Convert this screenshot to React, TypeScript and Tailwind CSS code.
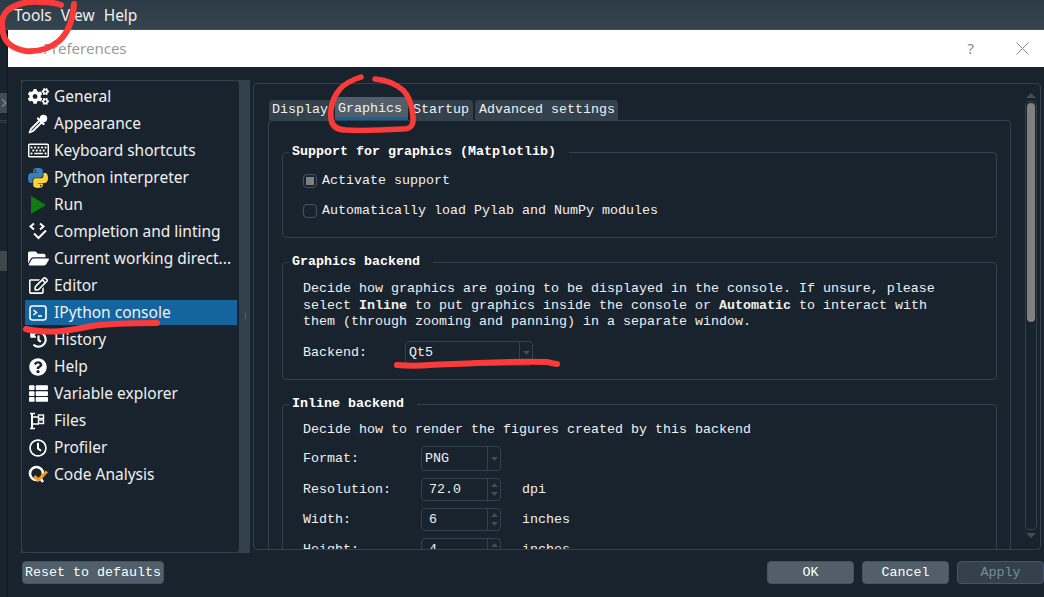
import type { ReactNode } from 'react';
import {
  FaCogs,
  FaRegKeyboard,
  FaFolderOpen,
  FaRegEdit,
  FaHistory,
  FaQuestionCircle,
  FaThList,
  FaRegClock,
} from 'react-icons/fa';
import { ChevronRight } from 'lucide-react';

const PythonIcon = () => (
  <svg width="20" height="20" viewBox="0 0 24 24">
    <path
      fill="#3c7fb5"
      fillRule="evenodd"
      d="M11.9 0C5.8 0 6.2 2.6 6.2 2.6v2.7H12v.8H3.9S0 5.7 0 11.9s3.4 6 3.4 6h2v-2.9s-.1-3.4 3.4-3.4h5.7s3.2.1 3.2-3.1V3.2S18.3 0 11.9 0zM8.7 1.9a1 1 0 1 1 0 2.1 1 1 0 0 1 0-2.1z"
    />
    <path
      fill="#fdd23c"
      fillRule="evenodd"
      transform="rotate(180 12 12)"
      d="M11.9 0C5.8 0 6.2 2.6 6.2 2.6v2.7H12v.8H3.9S0 5.7 0 11.9s3.4 6 3.4 6h2v-2.9s-.1-3.4 3.4-3.4h5.7s3.2.1 3.2-3.1V3.2S18.3 0 11.9 0zM8.7 1.9a1 1 0 1 1 0 2.1 1 1 0 0 1 0-2.1z"
    />
  </svg>
);

const EyedropperIcon = () => (
  <svg width="20" height="20" viewBox="0 0 20 20" fill="none">
    <path d="M11.5 6.5 L3 15 L1.5 18.5 L5 17 L13.5 8.5" stroke="#fff" strokeWidth="1.8" strokeLinejoin="round" />
    <circle cx="15.5" cy="4.5" r="3.7" fill="#fff" />
    <path d="M10 4.5 L15.5 10" stroke="#fff" strokeWidth="2.4" strokeLinecap="round" />
  </svg>
);

const RunIcon = () => (
  <svg width="20" height="20" viewBox="0 0 20 20">
    <path d="M3 1 L18 10 L3 19 Z" fill="#0d7d12" />
  </svg>
);

const CompletionIcon = () => (
  <svg width="20" height="20" viewBox="0 0 20 20" fill="none" stroke="#fff" strokeWidth="2">
    <path d="M6 1.5 L2.5 4.5 L6 7.5" />
    <path d="M12 1.5 L15.5 4.5 L12 7.5" />
    <path d="M6 11.5 L10.5 16 L18 8.5" />
  </svg>
);

const ConsoleIcon = () => (
  <svg width="20" height="20" viewBox="0 0 20 20" fill="none" stroke="#fff" strokeWidth="1.6">
    <rect x="2" y="3" width="16" height="14" rx="2.5" />
    <path d="M5.5 7 L8.5 9.5 L5.5 12" />
    <path d="M10 13 H14" />
  </svg>
);

const FilesIcon = () => (
  <svg width="20" height="20" viewBox="0 0 20 20" fill="none" stroke="#fff">
    <path d="M4 2 V18" strokeWidth="2" />
    <path d="M2 2.5 H7 M2 17.5 H7 M4 6 H11 M4 13 H11" strokeWidth="1.6" />
    <rect x="10.5" y="4" width="5" height="3.5" strokeWidth="1.4" />
    <rect x="10.5" y="9" width="5" height="3.5" strokeWidth="1.4" />
  </svg>
);

const CodeAnalysisIcon = () => (
  <svg width="20" height="20" viewBox="0 0 20 20" fill="none">
    <circle cx="8.5" cy="8.5" r="6.5" stroke="#fff" strokeWidth="2.6" />
    <path d="M12 13 L15 17" stroke="#fff" strokeWidth="2.6" />
    <path d="M6.5 11 L10 15 L19 6.5" stroke="#f59b14" strokeWidth="3" />
  </svg>
);

const navItems: { label: string; icon: ReactNode; active?: boolean }[] = [
  { label: 'General', icon: <FaCogs size={21} color="#fff" /> },
  { label: 'Appearance', icon: <EyedropperIcon /> },
  { label: 'Keyboard shortcuts', icon: <FaRegKeyboard size={21} color="#fff" /> },
  { label: 'Python interpreter', icon: <PythonIcon /> },
  { label: 'Run', icon: <RunIcon /> },
  { label: 'Completion and linting', icon: <CompletionIcon /> },
  { label: 'Current working direct...', icon: <FaFolderOpen size={21} color="#fff" /> },
  { label: 'Editor', icon: <FaRegEdit size={19} color="#fff" /> },
  { label: 'IPython console', icon: <ConsoleIcon />, active: true },
  { label: 'History', icon: <FaHistory size={17} color="#fff" /> },
  { label: 'Help', icon: <FaQuestionCircle size={18} color="#fff" /> },
  { label: 'Variable explorer', icon: <FaThList size={19} color="#fff" /> },
  { label: 'Files', icon: <FilesIcon /> },
  { label: 'Profiler', icon: <FaRegClock size={18} color="#fff" /> },
  { label: 'Code Analysis', icon: <CodeAnalysisIcon /> },
];

const GroupBox = ({ title, className, children }: { title: string; className: string; children: ReactNode }) => (
  <fieldset className={`rounded border border-[#32414b] ${className}`}>
    <legend className="ml-[6px] px-[3px] font-bold text-white text-[13.33px] leading-[16px]">
      <span className="pr-[10px]">{title}</span>
    </legend>
    <div className="pl-[20px]">{children}</div>
  </fieldset>
);

const Arrow = ({ up, big }: { up?: boolean; big?: boolean }) => (
  <svg width={big ? 10 : 7} height={big ? 5 : 4} viewBox="0 0 10 6" preserveAspectRatio="none">
    <path d={up ? 'M5 0 L10 6 H0 Z' : 'M0 0 H10 L5 6 Z'} fill="#3f4f5a" />
  </svg>
);

const Combo = ({ value, width }: { value: string; width: string }) => (
  <div className={`flex h-[25px] items-center rounded border border-[#32414b] ${width}`}>
    <span className="flex-1 pl-[3px]">{value}</span>
    <span className="flex h-full w-[13px] items-center justify-center border-l border-[#32414b]">
      <Arrow />
    </span>
  </div>
);

const Spin = ({ value }: { value: string }) => (
  <div className="flex h-[23px] w-[80px] items-center rounded border border-[#32414b]">
    <span className="flex-1 pl-[7px]">{value}</span>
    <span className="flex h-full w-[13px] flex-col items-center justify-around border-l border-[#32414b] py-[2px]">
      <Arrow up />
      <Arrow />
    </span>
  </div>
);

const FormRow = ({ label, unit, children }: { label: string; unit?: string; children: ReactNode }) => (
  <div className="flex items-center">
    <span className="w-[118px]">{label}</span>
    {children}
    {unit && <span className="ml-[21px]">{unit}</span>}
  </div>
);

const FooterButton = ({ label, disabled }: { label: string; disabled?: boolean }) => (
  <button
    className={`h-[23px] w-[87px] shrink-0 rounded border border-[#455364] pt-px text-center ${
      disabled ? 'bg-[#32414b] text-[#788d9c]' : 'bg-[#505f69] text-white'
    }`}
  >
    {label}
  </button>
);

const Annotations = () => (
  <svg
    className="pointer-events-none absolute left-0 top-0"
    width="1044"
    height="597"
    fill="none"
    stroke="#fb3a3a"
    strokeWidth="5.5"
    strokeLinecap="round"
    strokeLinejoin="round"
  >
    <path d="M74 4 C73 18 69 32 59 41 C49 49 37 52 26 51 C14 49 5 43 3 33 C1 24 2 15 8 10 C16 4 28 1 40 2 C48 2 56 3 61 5" strokeWidth="6" />
    <path d="M361 77 C352 80 345 83 340 89 C333 97 330 108 331 119 C332 126 337 130 346 130 C362 131 385 130 403 129 C411 129 414 125 413 116 C412 105 409 96 403 90 C396 84 386 80 375 79" />
    <path d="M26 329 C38 332 50 332 62 331 C72 330 82 328 92 326 C105 324 125 323 157 323" strokeWidth="6" />
    <path d="M397 365 C408 366 420 366 430 365 C445 364 462 364 477 363 C500 362 525 361 547 362 C552 363 555 364 557 364" strokeWidth="6" />
  </svg>
);

export default function App() {
  return (
    <div className="relative flex h-[597px] w-[1044px] flex-col overflow-hidden bg-[#19232d] font-['Liberation_Mono',monospace] text-[13.33px] leading-[16px] text-[#f0f0f0]">
      {/* Main window menu bar */}
      <div className="flex h-[30px] shrink-0 items-center gap-[9px] border-b border-[#455364] bg-gradient-to-b from-[#2c3a45] to-[#35454f] pl-[14px] font-['Noto_Sans',sans-serif] text-[15.5px] text-[#f0f0f0]">
        <span>Tools</span>
        <span>View</span>
        <span>Help</span>
      </div>

      <div className="flex min-h-0 flex-1">
        {/* Bit of the main window left of the dialog */}
        <div className="flex w-[8px] shrink-0 flex-col border-r border-[#11181f] pt-[63px]">
          <div className="flex h-[20px] items-center bg-[#404a52] text-[#7f8a92]">
            <ChevronRight size={14} className="-ml-[3px] shrink-0" />
          </div>
          <div className="mt-[7px] h-[3px] border-y border-[#32414b]" />
          <div className="mt-[128px] h-[20px] bg-[#3f464c]" />
        </div>

        {/* Preferences dialog */}
        <div className="flex min-w-0 flex-1 flex-col">
          <div className="flex h-[37px] shrink-0 items-center bg-white pb-[1px] pl-[35px] pr-[15px] font-['Noto_Sans',sans-serif] text-[15px] text-[#9b9b9b]">
            <span className="flex-1">Preferences</span>
            <span className="mr-[42px] text-[15px] text-[#8a8a8a]">?</span>
            <svg width="13" height="13" viewBox="0 0 13 13" stroke="#8a8a8a" fill="none">
              <path d="M0.5 0.5 L12.5 12.5 M12.5 0.5 L0.5 12.5" />
            </svg>
          </div>

          <div className="box-content flex h-[473px] shrink-0 pl-[13px] pr-[3px] pt-[13px]">
            {/* Page list */}
            <div className="flex w-[229px] shrink-0 bg-[#32414b]">
              <div className="flex w-[219px] flex-col gap-[2px] rounded-sm border border-[#32414b] bg-[#19232d] pl-[3px] pr-[2px] pt-[3px] font-['Noto_Sans',sans-serif] text-[15.5px]">
                {navItems.map((item) => (
                  <div
                    key={item.label}
                    className={`flex h-[25px] shrink-0 items-center ${item.active ? 'bg-[#1464a0] text-[#f0f0f0]' : ''}`}
                  >
                    <span className="flex w-[29px] shrink-0 justify-center pr-[3px]">{item.icon}</span>
                    <span className="whitespace-nowrap pb-[2px]">{item.label}</span>
                  </div>
                ))}
              </div>
              <div className="flex flex-1 items-center justify-center">
                <div className="h-[7px] w-px bg-[#505f69]" />
              </div>
            </div>

            {/* Page content */}
            <div className="ml-[3px] mt-[3px] flex h-[467px] min-w-0 flex-1 rounded border border-[#32414b] pl-[14px] pr-[4px]">
              <div className="flex w-[743px] shrink-0 flex-col pt-[13px]">
                <div className="flex h-[23px] shrink-0 items-end gap-[2px] pl-px">
                  <div className="flex h-[20px] w-[64px] items-center rounded-t-sm bg-[#32414b] pl-[3px]">Display</div>
                  <div className="flex h-[23px] w-[73px] items-center rounded-t-sm border-b-[3px] border-[#1464a0] bg-[#505f69] pl-[3px] pt-[4px]">
                    Graphics
                  </div>
                  <div className="flex h-[20px] w-[63px] items-center rounded-t-sm bg-[#32414b] pl-[3px]">Startup</div>
                  <div className="flex h-[20px] w-[143px] items-center rounded-t-sm bg-[#32414b] pl-[4px]">
                    Advanced settings
                  </div>
                </div>
                <div className="h-0 min-h-0 flex-1 overflow-hidden rounded-t border-x border-t border-[#32414b] px-[13px] pt-[23px]">
                  <GroupBox title="Support for graphics (Matplotlib)" className="h-[94px] pt-[13px]">
                    <div className="flex items-center gap-[5px]">
                      <span className="flex h-[14px] w-[14px] items-center justify-center rounded-sm border border-[#455364]">
                        <span className="h-[8px] w-[8px] bg-[#808080]" />
                      </span>
                      Activate support
                    </div>
                    <div className="mt-[14px] flex items-center gap-[5px]">
                      <span className="h-[14px] w-[14px] rounded-sm border border-[#455364]" />
                      Automatically load Pylab and NumPy modules
                    </div>
                  </GroupBox>

                  <GroupBox title="Graphics backend" className="mt-[16px] h-[126px] pt-[11px]">
                    <p className="leading-[16.5px]">
                      Decide how graphics are going to be displayed in the console. If unsure, please
                      <br />
                      select <b>Inline</b> to put graphics inside the console or <b>Automatic</b> to interact with
                      <br />
                      them (through zooming and panning) in a separate window.
                    </p>
                    <div className="mt-[10px] flex items-center">
                      <span className="w-[102px]">Backend:</span>
                      <Combo value="Qt5" width="w-[128px]" />
                    </div>
                  </GroupBox>

                  <GroupBox title="Inline backend" className="mt-[16px] h-[190px] pt-[10px]">
                    <p>Decide how to render the figures created by this backend</p>
                    <div className="mt-[8px] flex flex-col gap-[7px]">
                      <FormRow label="Format:">
                        <Combo value="PNG" width="w-[80px]" />
                      </FormRow>
                      <FormRow label="Resolution:" unit="dpi">
                        <Spin value="72.0" />
                      </FormRow>
                      <FormRow label="Width:" unit="inches">
                        <Spin value="6" />
                      </FormRow>
                      <FormRow label="Height:" unit="inches">
                        <Spin value="4" />
                      </FormRow>
                    </div>
                  </GroupBox>
                </div>
              </div>

              {/* Scroll bar */}
              <div className="ml-[14px] mt-[9px] flex w-[12px] shrink-0 flex-col items-center gap-[3px]">
                <Arrow up big />
                <div className="h-[429px] w-[12px] shrink-0 rounded border border-[#32414b] p-px">
                  <div className="h-[219px] rounded bg-[#808080]" />
                </div>
                <Arrow big />
              </div>
            </div>
          </div>

          {/* Dialog buttons */}
          <div className="flex flex-1 items-start gap-[8px] overflow-hidden pl-[14px] pt-[8px]">
            <button className="h-[23px] w-[142px] shrink-0 rounded border border-[#455364] bg-[#505f69] pt-px text-center text-white">
              Reset to defaults
            </button>
            <div className="ml-[595px] flex gap-[8px]">
              <FooterButton label="OK" />
              <FooterButton label="Cancel" />
              <FooterButton label="Apply" disabled />
            </div>
          </div>
        </div>
      </div>

      <Annotations />
    </div>
  );
}
